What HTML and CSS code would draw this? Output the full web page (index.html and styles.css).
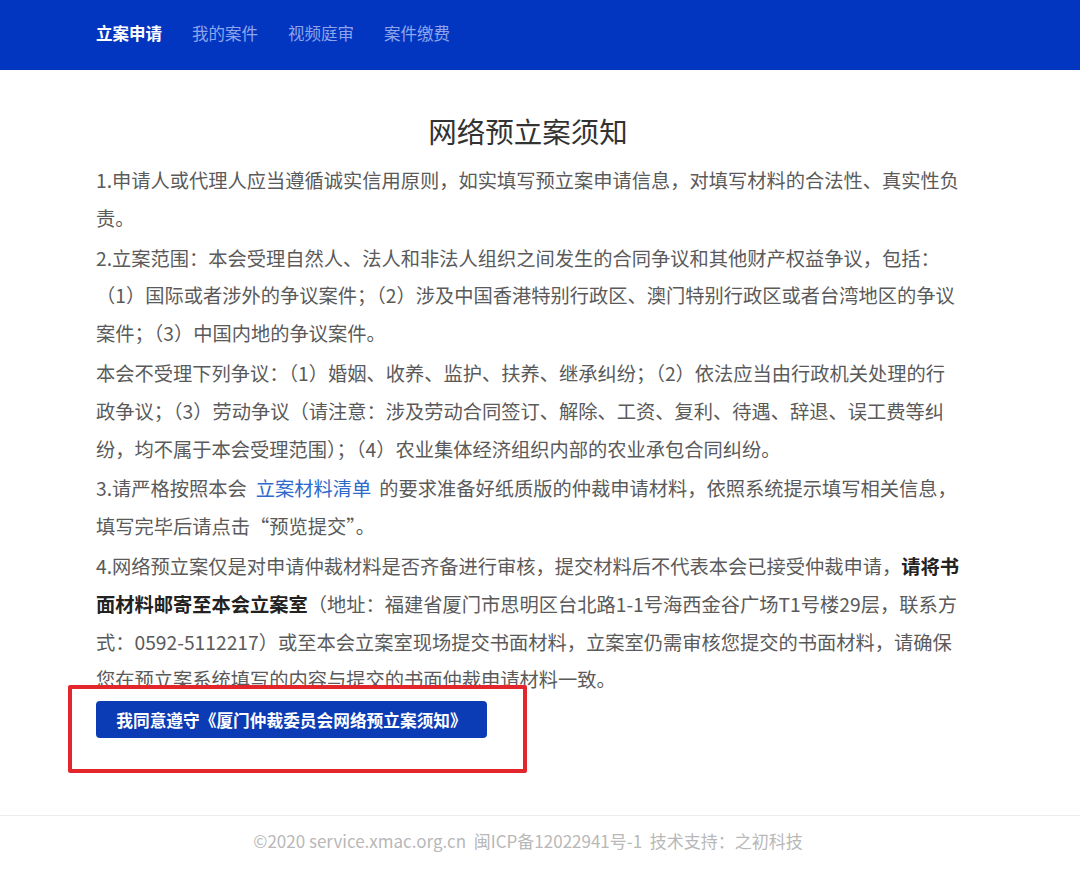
FILE: index.html
```html
<!DOCTYPE html>
<html lang="zh-CN">
<head>
<meta charset="utf-8">
<title>网络预立案须知</title>
<link rel="stylesheet" href="styles.css">
</head>
<body>
<header class="navbar">
  <nav class="nav">
    <a class="nav-item active">立案申请</a>
    <a class="nav-item">我的案件</a>
    <a class="nav-item">视频庭审</a>
    <a class="nav-item">案件缴费</a>
  </nav>
</header>
<main class="content">
  <h1 class="title">网络预立案须知</h1>
  <p class="para">1.申请人或代理人应当遵循诚实信用原则，如实填写预立案申请信息，对填写材料的合法性、真实性负责。</p>
  <p class="para">2.立案范围：本会受理自然人、法人和非法人组织之间发生的合同争议和其他财产权益争议，包括：（1）国际或者涉外的争议案件；（2）涉及中国香港特别行政区、澳门特别行政区或者台湾地区的争议案件；（3）中国内地的争议案件。</p>
  <p class="para">本会不受理下列争议：（1）婚姻、收养、监护、扶养、继承纠纷；（2）依法应当由行政机关处理的行政争议；（3）劳动争议（请注意：涉及劳动合同签订、解除、工资、复利、待遇、辞退、误工费等纠纷，均不属于本会受理范围）；（4）农业集体经济组织内部的农业承包合同纠纷。</p>
  <p class="para">3.请严格按照本会<a class="link">立案材料清单</a>的要求准备好纸质版的仲裁申请材料，依照系统提示填写相关信息，填写完毕后请点击“预览提交”。</p>
  <p class="para">4.网络预立案仅是对申请仲裁材料是否齐备进行审核，提交材料后不代表本会已接受仲裁申请，<strong class="strong">请将书面材料邮寄至本会立案室</strong>（地址：福建省厦门市思明区台北路1-1号海西金谷广场T1号楼29层，联系方式：0592-5112217）或至本会立案室现场提交书面材料，立案室仍需审核您提交的书面材料，请确保您在预立案系统填写的内容与提交的书面仲裁申请材料一致。</p>
  <div class="actions">
    <button class="agree-btn">我同意遵守《厦门仲裁委员会网络预立案须知》</button>
    <div class="highlight"></div>
  </div>
</main>
<footer class="footer">©2020 service.xmac.org.cn&nbsp;&nbsp;闽ICP备12022941号-1&nbsp;&nbsp;技术支持：之初科技</footer>
</body>
</html>
```
FILE: styles.css
```css
* { box-sizing: border-box; }
html, body {
  margin: 0;
  padding: 0;
  background: #ffffff;
  font-family: "Noto Sans CJK SC", "Noto Sans", sans-serif;
}
.navbar {
  height: 70px;
  background: #0336c0;
  display: flex;
  align-items: center;
}
.nav {
  display: flex;
  gap: 30px;
  padding-left: 96px;
  margin-top: -4px;
}
.nav-item {
  font-size: 16.5px;
  color: #8ea5ec;
  text-decoration: none;
  line-height: 24px;
}
.nav-item.active {
  color: #ffffff;
  font-weight: 700;
}
.content {
  width: 864px;
  margin-left: 96px;
  padding-top: 39px;
  padding-bottom: 77px;
}
.title {
  margin: 0 0 9px 0;
  text-align: center;
  font-size: 28.5px;
  font-weight: 400;
  color: #333333;
  line-height: 44px;
}
.para {
  margin: 0 0 2px 0;
  font-size: 19.25px;
  line-height: 37.8px;
  color: #5a5a5a;
}
.link {
  color: #2d6acb;
  text-decoration: none;
  padding: 0 8px 0 9px;
}
.strong {
  color: #222222;
  font-weight: 700;
}
.actions {
  position: relative;
  padding-top: 0;
}
.agree-btn {
  display: block;
  width: 391px;
  height: 37px;
  border: none;
  border-radius: 4px;
  background: #0b3cb6;
  color: #ffffff;
  font-family: "Noto Sans CJK SC", sans-serif;
  font-size: 16.7px;
  font-weight: 600;
  padding: 0;
  text-align: center;
}
.highlight {
  position: absolute;
  left: -28px;
  top: -16px;
  width: 459px;
  height: 88px;
  border: 4px solid #e3262b;
  border-radius: 2px;
}
.footer {
  border-top: 1px solid #ececec;
  width: 1080px;
  padding: 12px 24px 0 0;
  height: 72px;
  text-align: center;
  font-size: 17px;
  color: #b8b8b8;
}
```
